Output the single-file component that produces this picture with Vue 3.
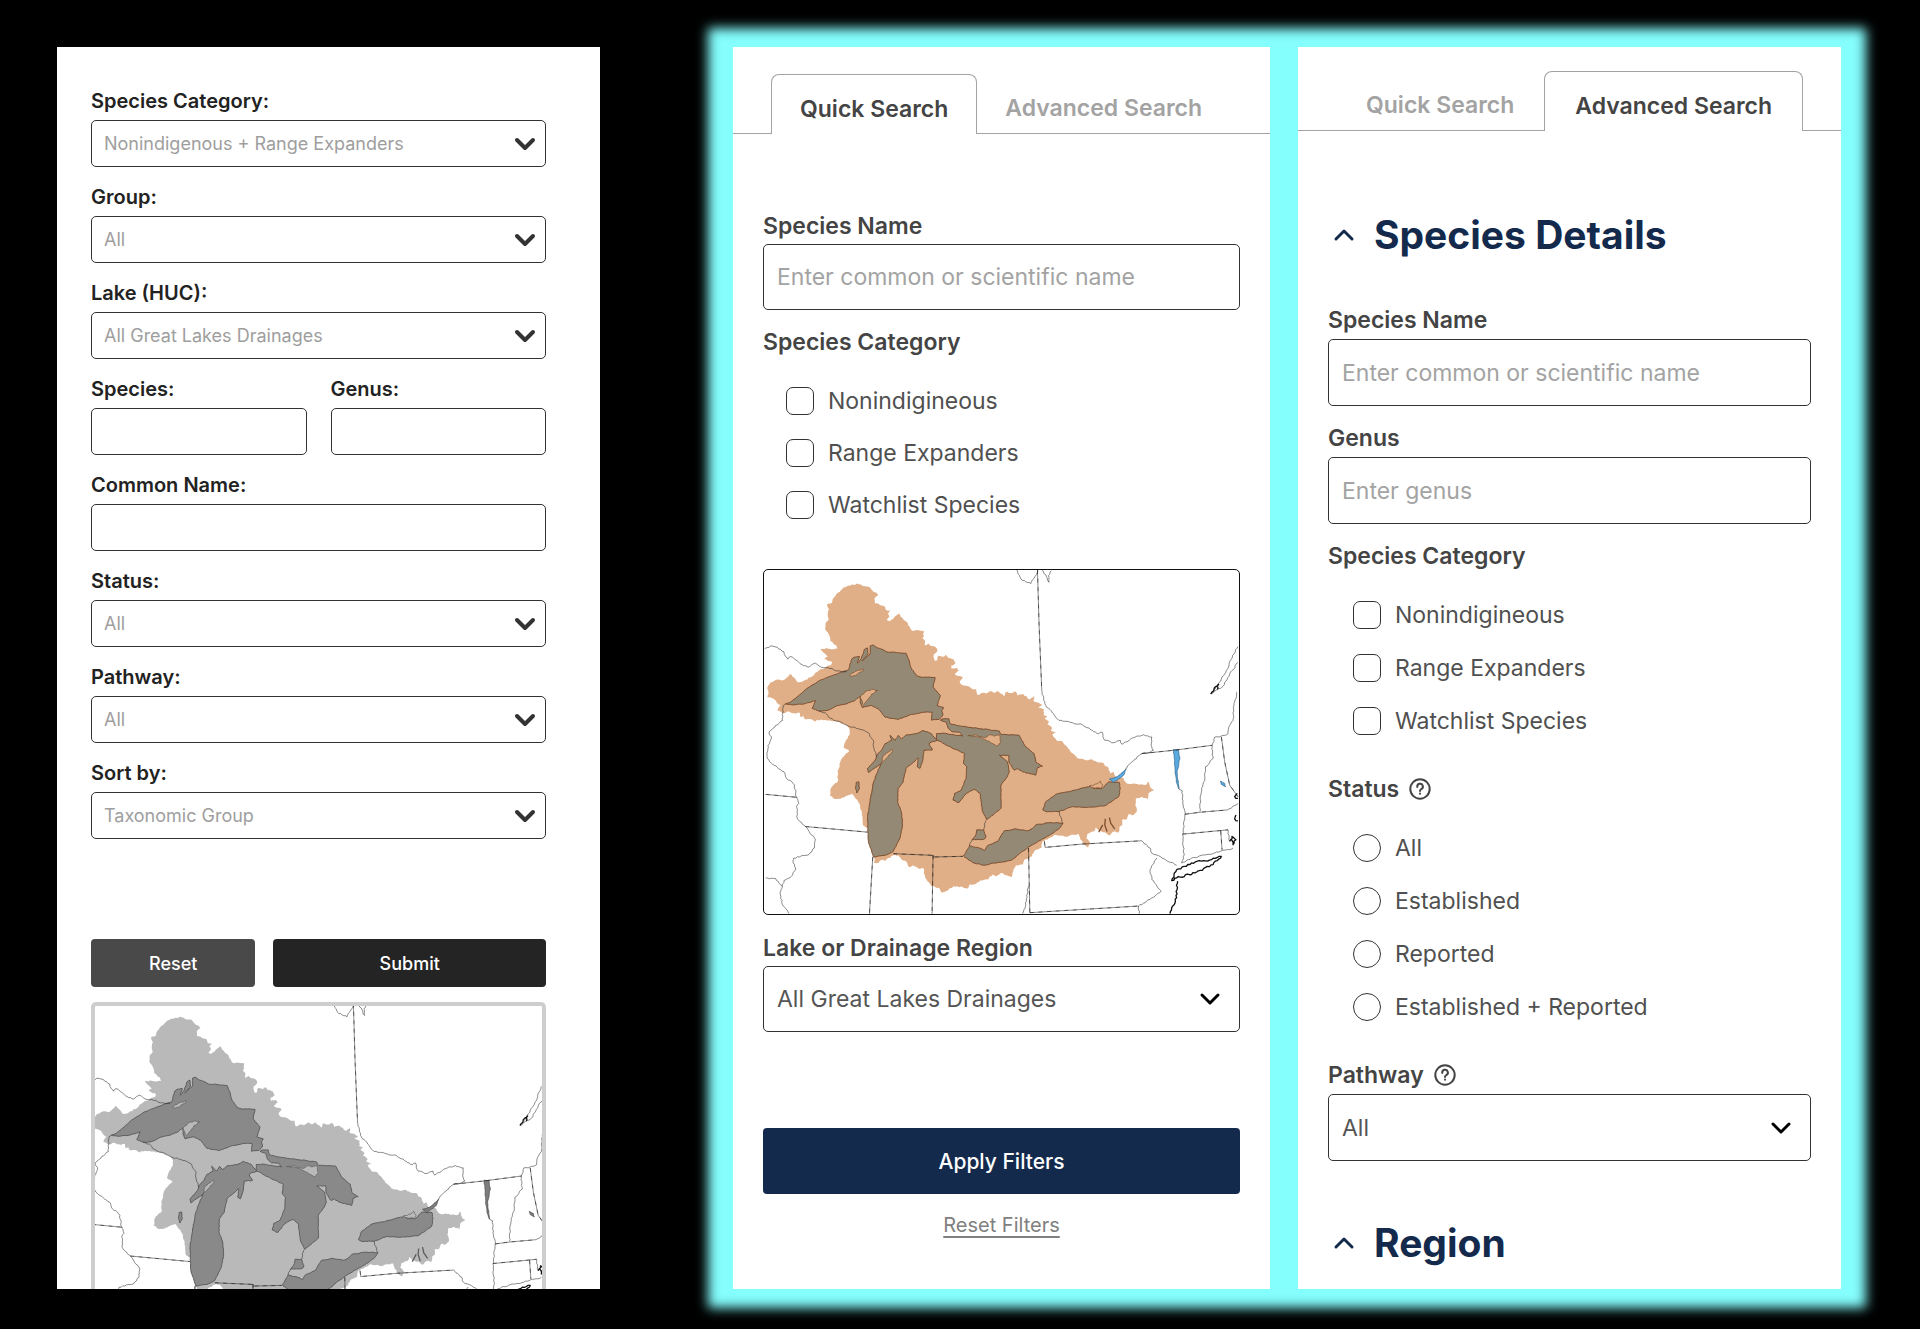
<script setup>
import { ref } from 'vue'

const legacyTop = [
  { id: 'l-category', label: 'Species Category:', value: 'Nonindigenous + Range Expanders' },
  { id: 'l-group', label: 'Group:', value: 'All' },
  { id: 'l-lake', label: 'Lake (HUC):', value: 'All Great Lakes Drainages' },
]
const legacyBottom = [
  { id: 'l-status', label: 'Status:', value: 'All' },
  { id: 'l-pathway', label: 'Pathway:', value: 'All' },
  { id: 'l-sort', label: 'Sort by:', value: 'Taxonomic Group' },
]
const categories = ['Nonindigineous', 'Range Expanders', 'Watchlist Species']
const statuses = ['All', 'Established', 'Reported', 'Established + Reported']
const quickCategories = ref([])
const advancedCategories = ref([])
const status = ref('')

// Adds small, repeatable zigzags between points so that outlines look like natural boundaries.
function rough(text, amp, closed) {
  const n = text.trim().split(/[\s,]+/).map(Number)
  const pts = []
  for (let i = 0; i < n.length; i += 2) pts.push([n[i], n[i + 1]])
  if (closed) pts.push(pts[0])
  let seed = 7
  const rand = () => {
    seed = (seed * 73 + 41) % 1009
    return seed / 1009 - 0.5
  }
  let d = `M${pts[0][0]} ${pts[0][1]}`
  for (let i = 1; i < pts.length; i++) {
    const [ax, ay] = pts[i - 1]
    const [bx, by] = pts[i]
    const len = Math.hypot(bx - ax, by - ay)
    const parts = Math.min(12, Math.max(1, Math.round(len / 6)))
    for (let k = 1; k < parts; k++) {
      const t = k / parts
      const o = rand() * amp * 2
      d += `L${(ax + (bx - ax) * t - ((by - ay) / len) * o).toFixed(1)} ${(ay + (by - ay) * t + ((bx - ax) / len) * o).toFixed(1)}`
    }
    d += `L${bx} ${by}`
  }
  return closed ? d + 'Z' : d
}

const basin = rough(
  `320 72 332 75 345 80 358 82 366 92 378 99 385 107 373 118 374 131 390 137 405 142 408 152 421 153 413 164 418 172 410 182 418 186 430 178 447 162 458 176 470 187 480 203 487 214 505 213 522 214 522 230 518 238 526 246 524 258 536 253 546 260 559 265 563 276 552 286 555 305 563 303 566 290 580 293 588 287 597 297 612 300 618 312 604 320 606 330 622 326 628 335 615 345 640 355 630 368 634 376 650 380 668 390 680 390 684 408 696 402 710 404 722 396 735 402 745 395 758 405 764 412 768 400 785 402 800 398 805 410 822 405 835 418 842 422 856 410 852 425 862 430 880 438 867 445 885 452 883 468 895 472 887 480 900 490 895 497 910 508 905 515 922 520 910 528 922 545 940 548 950 560 965 580 985 598 1010 605 1030 602 1050 612 1062 612 1068 622 1080 628 1085 645 1095 640 1100 655 1125 660 1135 675 1160 676 1190 680 1202 670 1205 685 1217 695 1200 705 1198 722 1180 715 1162 720 1160 740 1165 760 1155 770 1140 768 1135 782 1120 785 1120 802 1112 808 1110 822 1095 820 1083 832 1068 822 1050 818 1040 808 1035 820 1015 828 1012 840 1025 855 1018 868 1005 858 995 845 990 828 975 830 955 836 940 832 920 830 900 840 880 850 878 868 855 880 848 890 850 895 825 905 820 920 800 922 792 940 788 957 772 952 755 945 740 955 730 950 715 965 692 968 680 978 660 980 655 992 640 988 612 985 590 1000 578 1005 568 990 545 985 530 965 522 945 522 932 505 932 490 922 478 928 470 912 455 905 445 892 430 892 415 900 405 910 395 905 385 915 372 915 372 898 358 860 355 810 340 803 337 775 330 745 322 725 305 706 290 712 270 722 255 722 238 712 240 695 250 680 262 670 262 640 270 610 285 588 297 578 280 565 285 550 292 540 299 525 296 508 285 498 262 490 240 485 230 485 200 483 195 488 185 482 165 482 158 470 150 475 148 462 135 465 115 458 100 463 80 455 90 440 78 430 70 420 50 415 53 400 50 385 60 370 75 363 100 363 118 345 130 355 142 370 160 365 180 355 205 335 225 325 242 318 245 308 222 300 232 292 222 282 210 270 232 268 245 270 262 268 258 258 240 245 235 225 224 208 226 190 235 178 232 165 236 150 230 135 245 130 250 115 262 100 280 84 300 78`,
  2, true)

const lakes = [
  // Superior
  '105 435 122 428 150 405 175 385 205 366 240 352 270 340 295 332 304 300 312 294 328 292 322 312 334 298 342 272 352 266 354 284 336 306 360 285 360 260 370 257 382 266 400 272 410 278 440 280 468 282 478 305 483 325 500 350 520 355 556 355 550 385 572 410 562 440 582 446 576 456 580 468 568 482 545 484 547 460 520 460 480 468 445 482 405 475 385 450 365 440 337 446 330 430 330 412 315 424 290 435 262 440 230 455 205 456 185 448 196 425 165 434 130 438',
  // Huron with the North Channel
  '560 525 580 523 605 527 640 532 630 520 608 520 595 507 590 490 572 484 580 480 598 480 602 495 640 503 695 510 750 517 755 527 810 530 830 565 855 585 860 610 880 623 865 627 860 650 820 640 805 630 795 635 780 613 778 590 750 590 775 610 780 640 770 660 755 680 755 750 712 785 698 755 692 705 675 693 650 705 628 733 610 725 615 705 635 695 650 660 652 625 642 615 645 585 620 573 590 560 575 550 560 543',
  // Michigan
  '355 642 352 630 375 605 380 590 395 575 405 555 425 545 420 530 435 545 445 530 455 540 470 528 500 525 520 515 545 525 562 545 545 550 538 555 548 574 522 575 520 600 510 630 502 625 505 598 490 612 468 630 460 670 445 690 443 730 455 765 458 800 450 840 430 880 405 892 370 897 355 850 352 780 358 740 368 680 378 650 392 618 372 630',
  // St. Clair
  '668 845 680 828 682 815 702 815 710 835 705 843',
  // Erie
  '642 894 660 863 690 870 705 878 715 862 745 850 765 818 800 812 835 818 848 812 860 800 905 793 942 795 930 812 890 838 850 860 820 880 790 905 765 912 735 915 705 922 670 914',
  // Ontario
  '881 755 890 730 920 708 980 695 1025 683 1035 690 1060 690 1080 670 1112 672 1115 690 1110 715 1070 742 1010 748 970 745 930 760 890 760',
  // Winnebago
  '318 672 326 670 328 690 320 704 316 690',
].map((p) => rough(p, 1, true))

const islands = [
  '298 350 305 342 325 333 340 330 336 338 310 350',
  '331 412 345 398 365 391 383 394 365 405 350 425 337 445 337 428',
  '392 618 400 590 425 572 428 577 416 590',
  '655 531 680 529 705 537 720 528 735 533 750 528 755 550 742 562 720 548 700 540 680 534',
  '1022 682 1045 676 1055 668 1062 680 1056 690 1034 688',
].map((p) => rough(p, 2, true))

const smallWater = [
  '1082 662 1105 655 1128 635 1133 631 1125 650 1095 672',
  '1275 573 1290 573 1295 600 1286 640 1292 692 1284 670 1280 640 1278 600',
  '1417 668 1430 675 1433 685 1420 678',
].map((p) => rough(p, 1, true))

const borders = [
  '42 268 60 260 80 264 100 278 105 292 112 300 120 292 135 302 160 320 175 324 195 312 208 322 245 328 260 336 290 338',
  '105 435 98 440 96 485 75 500 55 520 62 540 52 560 50 600 70 620 100 640 105 655 132 680 137 715 145 735 138 745 140 780 165 805 195 845 192 870 175 890 130 900 128 915 135 935 118 960 100 968 95 985 88 1005 95 1040 115 1068',
  '45 960 75 962 95 985',
  '205 456 225 462 240 478 290 500 330 512 355 522 370 545 372 570 380 595',
  '878 395 890 440 930 485 1000 497 1030 515 1050 525 1060 520 1068 545 1095 552 1115 545 1120 557 1160 535 1185 528 1210 535 1208 560 1215 575 1200 582 1180 585 1150 610 1130 632',
  '1392 560 1400 535 1420 532 1440 525 1445 500 1455 485 1458 440 1466 400',
  '1392 560 1395 600 1372 625 1370 660 1360 690 1355 760',
  '1292 692 1302 697 1305 740 1310 770 1303 830 1308 890 1300 915',
  '1438 755 1470 735',
  '1440 815 1445 850',
  '1300 915 1330 900 1400 885 1455 870',
  '1180 848 1205 870 1210 885 1285 922',
  '1225 900 1205 935 1210 965 1238 1000 1190 1035 1170 1045 1172 1068',
  '838 985 832 1030 820 1068',
  '930 760 935 775 942 795',
  '709 787 703 815',
  '668 845 660 863',
  '803 31 815 58 845 72 862 45 866 33',
  '880 31 892 50 900 68 898 48 907 33',
  '1470 262 1450 300 1430 345 1410 375 1388 405 1400 395 1425 382 1445 345 1470 310',
].map((p) => rough(p, 2, false))

const stateLines =
  'M45 708L140 717M165 805L352 822M430 887L550 892V897L640 895M550 892L547 1070M368 897L358 1070M865 31L870 200L878 395M1180 585L1275 575L1392 560M1420 535L1430 610L1445 680L1470 715M1310 768L1355 762L1438 755M1303 828L1440 815M1418 818L1422 875M886 850L888 868L1000 858L1180 848M842 1065L1170 1045M838 870L842 1065'

const coast = [
  '1285 935 1330 915 1390 905 1420 895 1395 920 1340 945 1285 960 1270 968 1285 935',
  '1288 970 1285 1020 1270 1050 1265 1068',
  '1445 850 1452 835 1464 845 1455 860 1450 845',
  '1388 405 1398 388 1412 376 1408 392',
  '1468 705 1460 715 1470 720',
  '1464 770 1460 782 1470 788',
].map((p) => rough(p, 3, false))

const fingerLakes = 'M1070 782L1068 800L1075 820M1082 778L1086 795L1098 812M1062 800L1050 822'

const maps = {
  quick: { box: '41 31 1431 1038', fit: 'xMidYMid meet' },
  legacy: { box: '54 39 1403 1024', fit: 'none' },
}
</script>

<template>
  <main class="board">
    <form class="panel legacy" @submit.prevent>
      <div v-for="f in legacyTop" :key="f.id" class="field">
        <label :for="f.id">{{ f.label }}</label>
        <div class="select">
          <select :id="f.id"><option>{{ f.value }}</option></select>
          <svg class="chevron" viewBox="0 0 20 12" aria-hidden="true"><path d="M2 2L10 10L18 2" /></svg>
        </div>
      </div>
      <div class="pair">
        <div class="field">
          <label for="l-species">Species:</label>
          <input id="l-species" type="text" />
        </div>
        <div class="field">
          <label for="l-genus">Genus:</label>
          <input id="l-genus" type="text" />
        </div>
      </div>
      <div class="field">
        <label for="l-common">Common Name:</label>
        <input id="l-common" type="text" />
      </div>
      <div v-for="f in legacyBottom" :key="f.id" class="field">
        <label :for="f.id">{{ f.label }}</label>
        <div class="select">
          <select :id="f.id"><option>{{ f.value }}</option></select>
          <svg class="chevron" viewBox="0 0 20 12" aria-hidden="true"><path d="M2 2L10 10L18 2" /></svg>
        </div>
      </div>
      <div class="actions">
        <button type="reset" class="reset">Reset</button>
        <button type="submit" class="submit">Submit</button>
      </div>
      <div class="map-clip">
        <svg class="map" :viewBox="maps.legacy.box" :preserveAspectRatio="maps.legacy.fit" role="img" aria-label="Map of the Great Lakes basin">
          <path class="basin" :d="basin" />
          <path v-for="(d, i) in lakes" :key="'k' + i" class="lake" :d="d" />
          <path v-for="(d, i) in islands" :key="'i' + i" class="island" :d="d" />
          <path v-for="(d, i) in smallWater" :key="'w' + i" class="water" :d="d" />
          <path v-for="(d, i) in borders" :key="'b' + i" class="border" :d="d" />
          <path class="border" :d="stateLines" />
          <path class="border dashes" :d="stateLines" />
          <path v-for="(d, i) in coast" :key="'c' + i" class="coast" :d="d" />
          <path class="finger" :d="fingerLakes" />
        </svg>
      </div>
    </form>

    <div class="redesign">
      <form class="panel modern quick" @submit.prevent>
        <div class="tabs" role="tablist">
          <button type="button" role="tab" class="tab active" aria-selected="true">Quick Search</button>
          <button type="button" role="tab" class="tab" aria-selected="false">Advanced Search</button>
        </div>
        <div class="body">
          <div class="field">
            <label for="q-name">Species Name</label>
            <input id="q-name" type="text" placeholder="Enter common or scientific name" />
          </div>
          <div class="group" role="group" aria-labelledby="q-cat">
            <div id="q-cat" class="group-title">Species Category</div>
            <div class="options">
              <label v-for="c in categories" :key="c" class="option">
                <input v-model="quickCategories" type="checkbox" :value="c" />{{ c }}
              </label>
            </div>
          </div>
          <svg class="map" :viewBox="maps.quick.box" :preserveAspectRatio="maps.quick.fit" role="img" aria-label="Map of the Great Lakes basin">
            <path class="basin" :d="basin" />
            <path v-for="(d, i) in lakes" :key="'k' + i" class="lake" :d="d" />
            <path v-for="(d, i) in islands" :key="'i' + i" class="island" :d="d" />
            <path v-for="(d, i) in smallWater" :key="'w' + i" class="water" :d="d" />
            <path v-for="(d, i) in borders" :key="'b' + i" class="border" :d="d" />
            <path class="border" :d="stateLines" />
            <path class="border dashes" :d="stateLines" />
            <path v-for="(d, i) in coast" :key="'c' + i" class="coast" :d="d" />
            <path class="finger" :d="fingerLakes" />
          </svg>
          <div class="field">
            <label for="q-region">Lake or Drainage Region</label>
            <div class="select">
              <select id="q-region"><option>All Great Lakes Drainages</option></select>
              <svg class="chevron" viewBox="0 0 20 12" aria-hidden="true"><path d="M2 2L10 10L18 2" /></svg>
            </div>
          </div>
          <button type="submit" class="apply">Apply Filters</button>
          <a href="#" class="reset-link">Reset Filters</a>
        </div>
      </form>

      <form class="panel modern advanced" @submit.prevent>
        <div class="tabs" role="tablist">
          <button type="button" role="tab" class="tab" aria-selected="false">Quick Search</button>
          <button type="button" role="tab" class="tab active" aria-selected="true">Advanced Search</button>
        </div>
        <div class="body">
          <h2>
            <button type="button" class="section">
              <svg viewBox="0 0 20 12" aria-hidden="true"><path d="M2 10L10 2L18 10" /></svg>Species Details
            </button>
          </h2>
          <div class="field">
            <label for="a-name">Species Name</label>
            <input id="a-name" type="text" placeholder="Enter common or scientific name" />
          </div>
          <div class="field">
            <label for="a-genus">Genus</label>
            <input id="a-genus" type="text" placeholder="Enter genus" />
          </div>
          <div class="group" role="group" aria-labelledby="a-cat">
            <div id="a-cat" class="group-title">Species Category</div>
            <div class="options">
              <label v-for="c in categories" :key="c" class="option">
                <input v-model="advancedCategories" type="checkbox" :value="c" />{{ c }}
              </label>
            </div>
          </div>
          <div class="group" role="radiogroup" aria-labelledby="a-status">
            <div class="titled">
              <div id="a-status" class="group-title">Status</div>
              <button type="button" class="help" aria-label="About status">
                <svg viewBox="0 0 22 22" aria-hidden="true"><circle cx="11" cy="11" r="9.7" /><path d="M8.3 8.9A2.8 2.8 0 1 1 12.4 11C11.4 11.6 11 12 11 13.1" /><path d="M11 15.6v.2" /></svg>
              </button>
            </div>
            <div class="options">
              <label v-for="s in statuses" :key="s" class="option">
                <input v-model="status" type="radio" name="status" :value="s" />{{ s }}
              </label>
            </div>
          </div>
          <div class="field last">
            <div class="titled">
              <label for="a-pathway">Pathway</label>
              <button type="button" class="help" aria-label="About pathway">
                <svg viewBox="0 0 22 22" aria-hidden="true"><circle cx="11" cy="11" r="9.7" /><path d="M8.3 8.9A2.8 2.8 0 1 1 12.4 11C11.4 11.6 11 12 11 13.1" /><path d="M11 15.6v.2" /></svg>
              </button>
            </div>
            <div class="select">
              <select id="a-pathway"><option>All</option></select>
              <svg class="chevron" viewBox="0 0 20 12" aria-hidden="true"><path d="M2 2L10 10L18 2" /></svg>
            </div>
          </div>
          <h2>
            <button type="button" class="section">
              <svg viewBox="0 0 20 12" aria-hidden="true"><path d="M2 10L10 2L18 10" /></svg>Region
            </button>
          </h2>
        </div>
      </form>
    </div>
  </main>
</template>

<style>
body {
  margin: 0;
  background: #000;
}
</style>

<style scoped>
.board,
.board * {
  box-sizing: border-box;
}
.board {
  display: grid;
  grid-template-columns: minmax(0, 543fr) minmax(0, 1108fr);
  gap: 133px;
  min-height: 100vh;
  padding: 47px 79px 40px 57px;
  overflow: hidden;
  background: #000;
  font-family: Inter, 'Liberation Sans', sans-serif;
}
.redesign {
  position: relative;
  z-index: 0;
  display: grid;
  grid-template-columns: minmax(0, 537fr) minmax(0, 543fr);
  gap: 28px;
  background: #85fefe;
}
.redesign::before {
  content: '';
  position: absolute;
  z-index: -1;
  inset: -19px -25px;
  background: #85fefe;
  filter: blur(6px);
}
.panel {
  display: flex;
  flex-direction: column;
  background: #fff;
}
input,
select,
button {
  margin: 0;
  font: inherit;
}
.field {
  display: flex;
  flex-direction: column;
}
.field input,
.select select {
  width: 100%;
  appearance: none;
  background: #fff;
  border: 1px solid #333;
  border-radius: 5px;
  outline: none;
}
.select {
  display: grid;
  align-items: center;
}
.select select,
.chevron {
  grid-area: 1 / 1;
}
.chevron {
  justify-self: end;
  width: 20px;
  height: 12px;
  overflow: visible;
  fill: none;
  stroke-linecap: round;
  stroke-linejoin: round;
  pointer-events: none;
}

/* Current form */
.legacy {
  gap: 18px;
  padding: 42px 54px 0 34px;
}
.legacy .field {
  gap: 7px;
}
.legacy label {
  font-size: 20px;
  font-weight: 600;
  line-height: 24px;
  color: #222;
}
.legacy .field input,
.legacy select {
  height: 47px;
  padding: 0 12px;
  font-size: 18px;
  color: #9e9e9e;
}
.legacy .chevron {
  margin-right: 11px;
  stroke: #333;
  stroke-width: 4;
}
.pair {
  display: grid;
  grid-template-columns: 1fr 1fr;
  gap: 24px;
}
.actions {
  display: grid;
  grid-template-columns: 164fr 272fr;
  gap: 18px;
  margin-top: 82px;
}
.actions button {
  height: 48px;
  border: 0;
  border-radius: 4px;
  font-size: 18px;
  font-weight: 500;
  color: #fff;
}
.actions .reset {
  background: #494949;
}
.actions .submit {
  background: #242424;
}
.map-clip {
  flex: 1 1 0px;
  min-height: 0;
  margin-top: -3px;
  overflow: hidden;
}

/* Map */
.map {
  display: block;
  width: 100%;
  border-radius: 5px;
  background: #fff;
}
.quick .map {
  --basin: #e0af87;
  --lake: #938975;
  --shore: #7d4f2f;
  --water: #58a9e0;
  --water-edge: #2d5f85;
  aspect-ratio: 1431 / 1038;
  margin-top: 50px;
  border: 1px solid #111;
}
.legacy .map {
  --basin: #b9b9b9;
  --lake: #898989;
  --shore: #5a5a5a;
  --water: #7d7d7d;
  --water-edge: #444;
  aspect-ratio: 456 / 343;
  border: 4px solid #cecece;
}
.map path {
  fill: none;
  stroke-linejoin: round;
}
.map .basin {
  fill: var(--basin);
}
.map .lake {
  fill: var(--lake);
  stroke: var(--shore);
  stroke-width: 3;
}
.map .island {
  fill: var(--basin);
  stroke: var(--shore);
  stroke-width: 2;
}
.map .water {
  fill: var(--water);
  stroke: var(--water-edge);
  stroke-width: 2;
}
.map .border {
  stroke: #222;
  stroke-opacity: 0.8;
  stroke-width: 2;
}
.map .dashes {
  stroke: #111;
  stroke-dasharray: 12 14;
}
.map .coast {
  stroke: #111;
  stroke-width: 4;
}
.map .finger {
  stroke: var(--shore);
  stroke-width: 4;
}

/* Redesigned forms */
.tabs {
  display: flex;
}
.tabs::before,
.tabs::after {
  content: '';
  border-bottom: 1px solid #a3a3a3;
}
.tabs::before {
  flex: 0 0 38px;
}
.tabs::after {
  flex: 1;
}
.tab {
  height: 60px;
  padding: 9px 28px 0;
  border: 0;
  border-bottom: 1px solid #a3a3a3;
  background: none;
  font-size: 23px;
  font-weight: 600;
  line-height: 28px;
  white-space: nowrap;
  color: #a3a3a3;
}
.tab.active {
  padding-top: 8px;
  border: 1px solid #a3a3a3;
  border-bottom: 0;
  border-radius: 8px 8px 0 0;
  color: #444;
}
.advanced .tab {
  padding-right: 30px;
  padding-left: 30px;
}
.quick {
  padding-top: 27px;
}
.advanced {
  padding-top: 24px;
}
.body {
  display: flex;
  flex-direction: column;
  padding: 78px 30px 48px;
}
.advanced .body {
  padding: 80px 30px 16px;
}
.modern .field {
  gap: 4px;
}
.advanced .field {
  gap: 5px;
}
.modern .field label,
.group-title {
  font-size: 23px;
  font-weight: 600;
  line-height: 28px;
  color: #444;
}
.modern .field input,
.modern select {
  height: 66px;
  padding: 0 13px;
  font-size: 23px;
  color: #555;
}
.modern .field input::placeholder {
  color: #a3a3a3;
  opacity: 1;
}
.modern .chevron {
  margin-right: 20px;
  stroke: #000;
  stroke-width: 3;
}
.group {
  margin-top: 18px;
}
.options {
  display: flex;
  flex-direction: column;
  gap: 24px;
  margin-top: 31px;
  padding-left: 23px;
}
.option {
  display: flex;
  align-items: center;
  gap: 14px;
  font-size: 23px;
  line-height: 28px;
  color: #505050;
}
.option input {
  flex: none;
  width: 28px;
  height: 28px;
  appearance: none;
  background: #fff;
  border: 1px solid #333;
  border-radius: 7px;
}
.option input[type='radio'] {
  border-radius: 50%;
}
.option input:checked {
  background: #142a4d;
  box-shadow: inset 0 0 0 5px #fff;
}
.quick .map + .field {
  margin-top: 19px;
}
.apply {
  height: 66px;
  margin-top: 96px;
  border: 0;
  border-radius: 4px;
  background: #142a4d;
  font-size: 21px;
  font-weight: 500;
  color: #fff;
}
.reset-link {
  align-self: center;
  margin-top: 17px;
  font-size: 20px;
  line-height: 28px;
  text-underline-offset: 4px;
  color: #808080;
}
.advanced h2 {
  margin: 0 0 47px;
}
.section {
  display: flex;
  align-items: center;
  gap: 20px;
  padding: 0 0 0 6px;
  border: 0;
  background: none;
  font-size: 39px;
  font-weight: 700;
  line-height: 48px;
  color: #142a4d;
}
.section svg {
  width: 20px;
  height: 12px;
  overflow: visible;
  fill: none;
  stroke: #142a4d;
  stroke-width: 3;
  stroke-linecap: round;
  stroke-linejoin: round;
}
.advanced .field input,
.advanced select {
  height: 67px;
}
.advanced .field + .field {
  margin-top: 18px;
}
.advanced .options {
  gap: 25px;
  padding-left: 25px;
}
.advanced .group + .group,
.advanced .last {
  margin-top: 40px;
}
.titled {
  display: flex;
  align-items: center;
  gap: 10px;
}
.help {
  display: flex;
  padding: 0;
  border: 0;
  background: none;
}
.help svg {
  width: 22px;
  height: 22px;
  fill: none;
  stroke: #444;
  stroke-width: 2;
  stroke-linecap: round;
}
.advanced .last + h2 {
  margin: 58px 0 0;
}
</style>
